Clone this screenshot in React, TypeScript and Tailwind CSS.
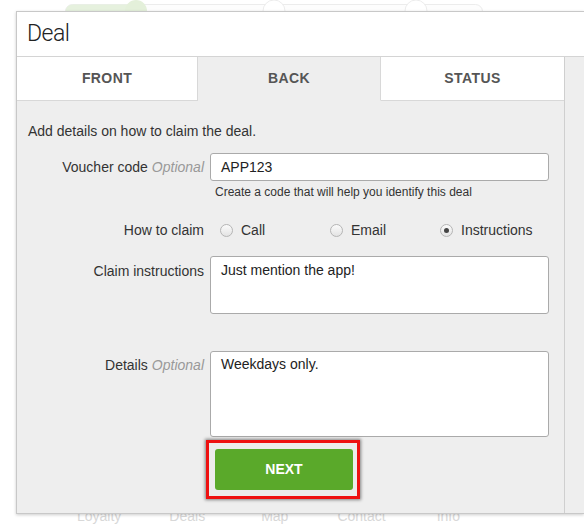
import React from "react";

const Radio = ({ label, checked }: { label: string; checked?: boolean }) => (
  <label className="flex w-[110px] items-center gap-[8px]">
    <span className="flex h-[13px] w-[13px] items-center justify-center rounded-full border border-[#b5b5b5] bg-gradient-to-b from-[#fbfbfb] to-[#e3e3e3]">
      {checked && <span className="h-[5px] w-[5px] rounded-full bg-[#444]" />}
    </span>
    <span className="text-[14px] text-[#333]">{label}</span>
  </label>
);

const Label = ({ text, optional, className = "" }: { text: string; optional?: boolean; className?: string }) => (
  <div className={`w-[176px] shrink-0 text-right text-[14px] leading-[20px] text-[#333] ${className}`}>
    {text}
    {optional && <span className="ml-[4px] italic text-[#999]">Optional</span>}
  </div>
);

const App = () => {
  return (
    <div className="relative h-[529px] w-[584px] overflow-hidden bg-white font-['Liberation_Sans',Arial,sans-serif]">
      {/* faded page behind the dialog */}
      <svg className="absolute left-0 top-0" width="584" height="14">
        <rect x="65.5" y="4.5" width="417" height="14" rx="7" fill="#fdfdfd" stroke="#ececec" />
        <rect x="65.5" y="4.5" width="72" height="14" rx="7" fill="#e6f1de" />
        <circle cx="136" cy="11" r="11" fill="#e4f0da" />
        <circle cx="274" cy="11" r="11" fill="#fff" stroke="#ececec" />
        <circle cx="416" cy="11" r="11" fill="#fff" stroke="#ececec" />
      </svg>
      <div className="absolute left-0 top-[506px] flex w-full text-[14px] text-[#d8d8d8]">
        <span className="ml-[77px]">Loyalty</span>
        <span className="ml-[48px]">Deals</span>
        <span className="ml-[56px]">Map</span>
        <span className="ml-[49px]">Contact</span>
        <span className="ml-[51px]">Info</span>
      </div>

      {/* dialog */}
      <div className="absolute left-[16px] right-0 top-[11px] z-10 flex h-[503px] flex-col border-b border-l border-t border-[#c8c8c8] bg-[#eee] shadow-[0_1px_3px_rgba(0,0,0,0.2)]">
        <div className="flex h-[45px] shrink-0 items-center border-b border-[#d4d4d4] bg-white pl-[10px] font-['Roboto',sans-serif] text-[23px] font-light tracking-[-0.5px] text-[#222]">
          Deal
        </div>
        <div className="flex flex-1">
          <div className="flex w-[548px] shrink-0 flex-col border-r border-[#cfcfcf]">
            <div className="flex h-[44px] shrink-0 text-[14px] font-bold tracking-[0.4px] text-[#555]">
              <div className="flex w-[181px] items-center justify-center border-b border-r border-[#d8d8d8] bg-white">FRONT</div>
              <div className="flex w-[183px] items-center justify-center border-b border-r border-b-[#eee] border-r-[#d8d8d8] bg-[#eee]">BACK</div>
              <div className="flex flex-1 items-center justify-center border-b border-[#d8d8d8] bg-white">STATUS</div>
            </div>

            <div className="flex flex-col pl-[11px] pt-[20px]">
              <p className="text-[14px] leading-[20px] text-[#333]">Add details on how to claim the deal.</p>

              <div className="mt-[12px] flex gap-[6px]">
                <Label text="Voucher code" optional className="pt-[4px]" />
                <div className="flex flex-col">
                  <div className="flex h-[28px] w-[339px] items-center rounded-[3px] border border-[#aaa] bg-white px-[10px] text-[14px] text-[#222]">
                    APP123
                  </div>
                  <span className="mt-[3px] pl-[5px] text-[12px] leading-[16px] text-[#333]">
                    Create a code that will help you identify this deal
                  </span>
                </div>
              </div>

              <div className="mt-[20px] flex h-[20px] items-center gap-[6px]">
                <Label text="How to claim" />
                <div className="flex pl-[10px]">
                  <Radio label="Call" />
                  <Radio label="Email" />
                  <Radio label="Instructions" checked />
                </div>
              </div>

              <div className="mt-[16px] flex gap-[6px]">
                <Label text="Claim instructions" className="pt-[5px]" />
                <div className="h-[58px] w-[339px] rounded-[3px] border border-[#aaa] bg-white px-[10px] pt-[3px] text-[14px] leading-[20px] text-[#222]">
                  Just mention the app!
                </div>
              </div>

              <div className="mt-[37px] flex gap-[6px]">
                <Label text="Details" optional className="pt-[4px]" />
                <div className="h-[86px] w-[339px] rounded-[3px] border border-[#aaa] bg-white px-[10px] pt-[2px] text-[14px] leading-[20px] text-[#222]">
                  Weekdays only.
                </div>
              </div>

              <div className="mt-[3px] flex">
                <div className="w-[178px] shrink-0" />
                <div className="border-[3px] border-[#ee1111] bg-[#ececec] p-[6px] pr-[4px] shadow-[0_0_3px_1px_rgba(0,0,0,0.45)]">
                  <button className="flex h-[41px] w-[138px] items-center justify-center rounded-[3px] bg-[#5aa92a] text-[14px] font-bold text-white">
                    NEXT
                  </button>
                </div>
              </div>
            </div>
          </div>
          <div className="flex-1" />
        </div>
      </div>
    </div>
  );
};

export default App;
